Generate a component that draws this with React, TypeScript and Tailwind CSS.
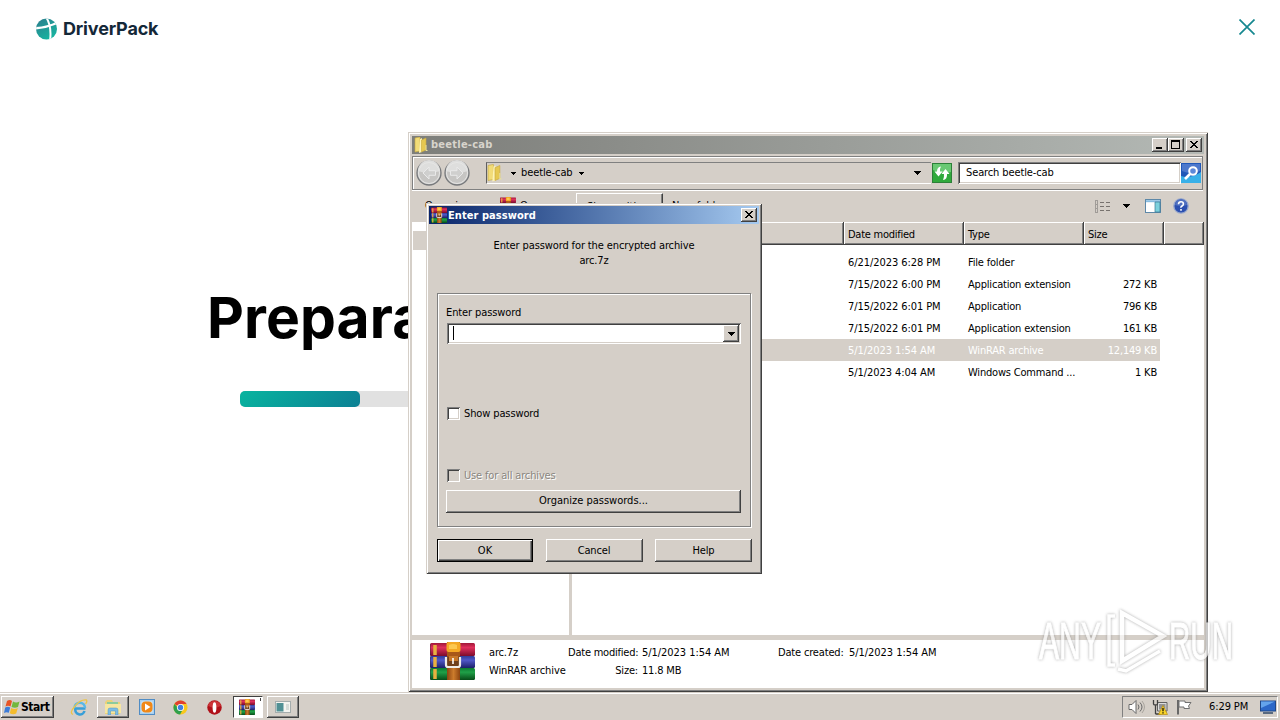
import type { ReactNode } from 'react';

const raised =
  'bg-[#d5cfc8] shadow-[inset_-1px_-1px_#404040,inset_1px_1px_#fff,inset_-2px_-2px_#808080]';
const sunken =
  'bg-white shadow-[inset_1px_1px_#808080,inset_-1px_-1px_#fff,inset_2px_2px_#404040,inset_-2px_-2px_#d5cfc8]';
const frame =
  'bg-[#d5cfc8] shadow-[inset_1px_1px_#d5cfc8,inset_-1px_-1px_#404040,inset_2px_2px_#fff,inset_-2px_-2px_#808080]';

const files = [
  { date: '6/21/2023 6:28 PM', type: 'File folder', size: '' },
  { date: '7/15/2022 6:00 PM', type: 'Application extension', size: '272 KB' },
  { date: '7/15/2022 6:01 PM', type: 'Application', size: '796 KB' },
  { date: '7/15/2022 6:01 PM', type: 'Application extension', size: '161 KB' },
  { date: '5/1/2023 1:54 AM', type: 'WinRAR archive', size: '12,149 KB', selected: true },
  { date: '5/1/2023 4:04 AM', type: 'Windows Command ...', size: '1 KB' },
];

function Caret({ className = '' }: { className?: string }) {
  return (
    <svg viewBox="0 0 8 4" className={`shrink-0 ${className}`} shapeRendering="crispEdges">
      <path d="M0 0H8L4 4Z" fill="#000" />
    </svg>
  );
}

function WinRar({ className = '' }: { className?: string }) {
  return (
    <svg viewBox="0 0 45 38" preserveAspectRatio="none" className={`shrink-0 ${className}`}>
      <defs>
        <linearGradient id="rar-r" x2="0" y2="1">
          <stop stopColor="#a01838" /><stop offset=".35" stopColor="#e0305c" /><stop offset="1" stopColor="#7c0c2c" />
        </linearGradient>
        <linearGradient id="rar-b" x2="0" y2="1">
          <stop stopColor="#303c98" /><stop offset=".35" stopColor="#5058c8" /><stop offset="1" stopColor="#1c2068" />
        </linearGradient>
        <linearGradient id="rar-g" x2="0" y2="1">
          <stop stopColor="#0c7a30" /><stop offset=".35" stopColor="#20a048" /><stop offset="1" stopColor="#084c18" />
        </linearGradient>
        <linearGradient id="rar-belt" x2="1" y2="0">
          <stop stopColor="#8c4410" /><stop offset=".5" stopColor="#cc7c2c" /><stop offset="1" stopColor="#8c4410" />
        </linearGradient>
      </defs>
      <rect y="1" width="45" height="13" rx="1.5" fill="url(#rar-r)" />
      <rect y="14" width="45" height="12" rx="1.5" fill="url(#rar-b)" />
      <rect y="26" width="45" height="12" rx="1.5" fill="url(#rar-g)" />
      <path d="M5 3v10M5 15v10M5 27v10" stroke="#e8b040" strokeWidth="3.5" />
      <path d="M.5 2v36" stroke="#302040" strokeOpacity=".4" />
      <rect x="17" width="13" height="38" fill="url(#rar-belt)" />
      <rect x="16.5" width="14" height="10" rx="2" fill="#f4a824" />
      <path d="M19 3q4-2 8 0v4h-8z" fill="#fcc850" />
      <path d="M17 10h13v4H17z" fill="#a85818" />
      <path d="M16 15v8q0 2 2 2h10q2 0 2-2v-8" fill="#70401c" stroke="#f0ece8" strokeWidth="2.2" />
      <path d="M19 14h9v5h-9z" fill="#c87828" />
      <path d="M23 16v6" stroke="#fff" strokeWidth="1.6" />
    </svg>
  );
}

function ZipFolder({ className = '' }: { className?: string }) {
  return (
    <svg viewBox="0 0 14 16" className={`shrink-0 ${className}`}>
      <path d="M1 1L6 0V14L1 15Z" fill="#f2dc78" stroke="#c9a93c" strokeWidth=".6" />
      <path d="M6 2L8 1V15L5 16Z" fill="#fdf3b4" />
      <path d="M7.5 3L12 1V13L7.5 15Z" fill="#e6c850" stroke="#c9a93c" strokeWidth=".6" />
      <path d="M12 8v5.5h1.5" stroke="#e8e0a0" fill="none" />
    </svg>
  );
}

function WinButton({ children }: { children: ReactNode }) {
  return (
    <div className={`flex h-[14px] w-4 items-center justify-center ${raised}`}>
      <svg viewBox="0 0 16 14" className="h-[14px] w-4" shapeRendering="crispEdges" fill="none" stroke="#000">
        {children}
      </svg>
    </div>
  );
}

const closeCross = <path d="M4 3l7 7M5 3l7 7M11 3l-7 7M12 3l-7 7" strokeWidth="1" shapeRendering="auto" />;

function NavCircle({ flip }: { flip?: boolean }) {
  return (
    <svg viewBox="0 0 26 26" className={flip ? 'ml-[2px] size-[26px] -scale-x-100' : 'size-[26px]'}>
      <circle cx="13" cy="13" r="12" fill="#c6c5c3" stroke="#77797c" strokeWidth="1.3" />
      <path d="M2 11a11 11 0 0 1 22 0q-11 4-22 0z" fill="#dededd" />
      <circle cx="13" cy="13" r="10.5" fill="none" stroke="#e6e6e5" />
      <path d="M13 7L7 13L13 19V15.3H19.5V10.7H13Z" fill="#cfcfce" stroke="#e9e9e9" />
    </svg>
  );
}

function Explorer() {
  return (
    <div className={`absolute left-[408px] top-[132px] flex h-[560px] w-[800px] flex-col p-1 ${frame}`}>
      <div className="flex h-[18px] shrink-0 items-center bg-linear-to-r from-[#7d7e7a] to-[#b4b9b5] px-[2px]">
        <ZipFolder className="h-4 w-[14px]" />
        <span className="ml-[3px] grow pt-px font-bold tracking-[0.25px] text-[#d8d4cc]">beetle-cab</span>
        <WinButton><path d="M4 10.5h6M4 9.5h6" /></WinButton>
        <WinButton><path d="M3.5 2.5h8v8h-8zM3 3.5h9" /></WinButton>
        <div className="ml-[2px]"><WinButton>{closeCross}</WinButton></div>
      </div>

      {/* Address bar */}
      <div className="mr-px mt-[2px] flex h-[34px] shrink-0 items-center border border-[#808080] pl-[3px] shadow-[inset_1px_1px_#fff,0_1px_#fff]">
        <div className="flex w-[70px]">
          <NavCircle />
          <NavCircle flip />
        </div>
        <div className="flex h-[22px] w-[445px] items-center border-b border-l border-t border-b-white border-l-[#606060] border-t-[#808080]">
          <ZipFolder className="h-[18px] w-[15px]" />
          <Caret className="ml-[8px] h-[3px] w-[6px]" />
          <span className="ml-[5px] w-[53px] tracking-[-0.1px]">beetle-cab</span>
          <Caret className="ml-[4px] h-[3px] w-[6px]" />
          <Caret className="ml-auto mr-[10px] h-1 w-[8px]" />
        </div>
        <svg viewBox="0 0 20 20" className="ml-px size-5">
          <rect x=".5" y=".5" width="19" height="19" fill="#30a93c" stroke="#2c8038" />
          <path d="M1 1h18v8Q9 12 1 7z" fill="#69c973" />
          <path d="M9 3.5Q5 4 5 8.500H2.500L6.500 13.500L10.500 8.500H8Q7.500 6 9 3.500zM11 17q4.500-.5 4-6h2.500l-4-5-4 5h2.500q.3 3.500-1 6z" fill="#fff" />
        </svg>
        <div className={`ml-[6px] flex h-[22px] w-[223px] items-center pl-2 tracking-[-0.12px] ${sunken}`}>
          Search beetle-cab
        </div>
        <svg viewBox="0 0 20 20" className="size-5">
          <rect width="20" height="20" fill="#2058b8" />
          <path d="M0 20V13Q10 16 20 9v11z" fill="#38b0e8" />
          <path d="M1 1h18v7Q10 12 1 8z" fill="#4c78cc" />
          <circle cx="12" cy="8" r="3.8" fill="#5c88d8" stroke="#fff" strokeWidth="2" />
          <path d="M9 11l-5 5" stroke="#fff" strokeWidth="2.6" />
        </svg>
      </div>

      {/* Command bar */}
      <div className="flex h-8 shrink-0 items-center">
        <span className="ml-[13px] w-[75px]">Organize</span>
        <WinRar className="-mt-[2px] size-4" />
        <span className="ml-1 w-[56px]">Open</span>
        <div className="h-[26px] w-[87px] border border-b-[#404040] border-l-white border-r-[#404040] border-t-white pl-[10px] leading-[25px] shadow-[inset_-1px_0_#808080]">
          Share with
        </div>
        <span className="ml-[9px]">New folder</span>
        <svg viewBox="0 0 16 13" className="ml-auto mr-[12px] h-[13px] w-4" shapeRendering="crispEdges" fill="none">
          <path d="M1.5 1v11M3.5 1v11M1 .5h3M1 4.5h3M1 8.5h3M1 12.5h3" stroke="#a09c98" />
          <path d="M6 2.5h4m2 0h4M6 6.5h4m2 0h4M6 10.5h4m2 0h4" stroke="#77726e" />
        </svg>
        <Caret className="mr-[15px] h-1 w-[8px]" />
        <svg viewBox="0 0 16 14" className="mr-3 h-[14px] w-4">
          <rect x=".5" y=".5" width="15" height="13" fill="#fff" stroke="#5d88a8" />
          <path d="M1 2.2h14" stroke="#88bce0" strokeWidth="2" />
          <path d="M10 3h5v10h-5z" fill="#7cd0dc" stroke="#3a7894" strokeWidth=".7" />
        </svg>
        <svg viewBox="0 0 16 16" className="mr-[15px] size-4">
          <circle cx="8" cy="8" r="7.2" fill="#2c50b0" stroke="#98a8cc" strokeWidth="1.3" />
          <path d="M2 7a6 6 0 0 1 12 0q-6 2-12 0z" fill="#5070c0" />
          <path d="M5.5 6.2Q5.6 3.8 8 3.8T10.4 6Q10.4 7.2 9 8T8 9.8M8 11v1.8" stroke="#fff" strokeWidth="1.6" fill="none" />
        </svg>
      </div>

      <div className="flex h-[413px] shrink-0 bg-white">
        <div className="w-[157px]">
          <div className="ml-px mt-[9px] h-[19px] bg-[#d5cfc8]" />
        </div>
        <div className="w-[3px] bg-[#d5cfc8]" />
        <div className="flex grow flex-col">
          <div className="grid h-[23px] grid-cols-[272px_120px_120px_80px_40px] grid-rows-[23px]">
            {['', 'Date modified', 'Type', 'Size', ''].map((label, i) => (
              <div key={i} className={`pl-1 pt-px leading-[23px] tracking-[-0.25px] ${raised}`}>{label}</div>
            ))}
          </div>
          <div className="mt-[6px]">
            {files.map((f, i) => (
              <div
                key={i}
                className={`grid h-[22px] w-[588px] grid-cols-[276px_120px_120px_69px] whitespace-nowrap leading-[23px] ${f.selected ? 'bg-[#d5cfc8] text-white' : ''}`}
              >
                <span />
                <span className="tracking-[-0.07px]">{f.date}</span>
                <span className="tracking-[-0.19px]">{f.type}</span>
                <span className="text-right tracking-[-0.2px]">{f.size}</span>
              </div>
            ))}
          </div>
        </div>
      </div>

      {/* Details pane */}
      <div className="mt-[5px] flex h-12 shrink-0 whitespace-nowrap bg-white tracking-[-0.17px]">
        <WinRar className="ml-[18px] mt-[2px] h-[38px] w-[45px]" />
        <div className="ml-[14px] mt-1 w-[79px] leading-[18px]">
          <div>arc.7z</div>
          <div className="tracking-[-0.1px]">WinRAR archive</div>
        </div>
        <div className="mt-1 grid w-[210px] grid-cols-[70px_1fr] content-start gap-x-[4px] leading-[18px]">
          <span className="text-right tracking-[-0.22px]">Date modified:</span>
          <span className="tracking-[-0.05px]">5/1/2023 1:54 AM</span>
          <span className="text-right">Size:</span>
          <span>11.8 MB</span>
        </div>
        <div className="mt-1 flex leading-[18px]">
          <span className="w-[71px]">Date created:</span>
          <span className="tracking-[-0.05px]">5/1/2023 1:54 AM</span>
        </div>
      </div>
    </div>
  );
}

function PasswordDialog() {
  return (
    <div className={`absolute left-[426px] top-[203px] flex h-[371px] w-[336px] flex-col p-[3px] ${frame}`}>
      <div className="flex h-[18px] shrink-0 items-center bg-linear-to-r from-[#0a246a] to-[#a6caf0] px-[2px]">
        <WinRar className="size-4" />
        <span className="ml-px grow pt-[2px] font-bold tracking-[0.06px] text-white">Enter password</span>
        <WinButton>{closeCross}</WinButton>
      </div>

      <div className="mt-[14px] h-[55px] text-center leading-[15px] tracking-[-0.12px]">
        <div>Enter password for the encrypted archive</div>
        <div>arc.7z</div>
      </div>

      <div className="mx-2 flex h-[234px] flex-col border border-[#808080] px-[9px] shadow-[inset_1px_1px_#fff,1px_1px_#fff]">
        <span className="-ml-px mt-[10px] leading-[17px] tracking-[-0.1px]">Enter password</span>
        <div className={`mt-[2px] flex h-[21px] w-[294px] items-center justify-between py-[2px] pl-[2px] pr-[2px] ${sunken}`}>
          <div className="mb-px ml-1 h-[14px] w-px bg-black" />
          <div className={`flex h-[17px] w-4 items-center justify-center ${raised}`}>
            <Caret className="h-1 w-[8px]" />
          </div>
        </div>
        <div className="mt-[63px] flex h-[13px] items-center gap-[4px] tracking-[-0.12px]">
          <div className={`size-[13px] ${sunken}`} />
          <span className="pt-[2px]">Show password</span>
        </div>
        <div className="mt-[49px] flex h-[13px] items-center gap-[4px] tracking-[-0.15px] text-[#8a8680] [text-shadow:1px_1px_#fff]">
          <div className="size-[13px] bg-[#d5cfc8] shadow-[inset_1px_1px_#808080,inset_-1px_-1px_#fff,inset_2px_2px_#404040]" />
          <span className="pt-[2px]">Use for all archives</span>
        </div>
        <div className={`-ml-px mt-[8px] flex h-[23px] w-[295px] items-center justify-center ${raised}`}>
          Organize passwords...
        </div>
      </div>

      <div className="mx-[7px] mt-[12px] flex justify-between">
        <div className="ml-px flex h-[23px] w-[96px] items-center justify-center border border-black bg-[#d5cfc8] pt-px shadow-[inset_1px_1px_#fff,inset_-1px_-1px_#404040,inset_-2px_-2px_#808080]">
          OK
        </div>
        <div className={`flex h-[23px] w-[97px] items-center justify-center pt-px tracking-[-0.15px] ${raised}`}>Cancel</div>
        <div className={`flex h-[23px] w-[97px] items-center justify-center pt-px tracking-[-0.2px] ${raised}`}>Help</div>
      </div>
    </div>
  );
}

function Taskbar() {
  return (
    <div className="absolute inset-x-0 bottom-0 flex h-7 items-center bg-[#d5cfc8] pl-px shadow-[inset_0_1px_#d5cfc8,inset_0_2px_#fff]">
      <div className={`mt-[2px] flex h-[22px] w-[53px] items-center pl-[3px] text-[12px] font-bold tracking-[-0.45px] ${raised}`}>
        <svg viewBox="0 0 16 16" className="mr-px size-4 shrink-0">
          <path d="M3 2Q6 0 8 2L6.5 7.5Q4 6 1.5 7.5Z" fill="#e85424" />
          <path d="M9 2.5Q12 4.5 15.5 2.5L14 8Q11 9.5 7.5 8Z" fill="#72b83c" />
          <path d="M1.2 8.5Q4 7 6.2 8.5L4.8 13.8Q2.5 12.5 0 14Z" fill="#3c7cd8" />
          <path d="M7.2 9Q10.5 10.8 13.8 9L12.2 14.5Q9 16 5.8 14.2Z" fill="#f4bc2c" />
        </svg>
        Start
      </div>

      <svg viewBox="0 0 18 18" className="ml-[16px] mt-[2px] size-[18px]">
        <path d="M15.5 10.5H5.5a4.5 4.5 0 0 0 9 2.5" fill="none" stroke="#389fd8" strokeWidth="2.6" />
        <path d="M4.500 10a5 5 0 0 1 10.500 0" fill="none" stroke="#58b8e8" strokeWidth="2.6" />
        <path d="M3 16.5Q-1 15 5 8T16.5 2q1 2-1 4" fill="none" stroke="#ecc448" strokeWidth="1.3" />
      </svg>
      <div className={`ml-[9px] mt-[2px] flex h-[22px] w-8 items-center justify-center ${raised}`}>
        <svg viewBox="0 0 18 16" className="h-4 w-[18px]">
          <path d="M1 3l2-2h5l1 2h7v12H1z" fill="#ead27a" />
          <path d="M3 3h11v4H3z" fill="#8ccb9c" />
          <path d="M1 5h16v9H1z" fill="#f6e6a0" />
          <path d="M4 16V11q0-2 2-2h6q2 0 2 2v5h-2.5v-4h-5v4z" fill="#7cbce4" stroke="#4c94c4" strokeWidth=".5" />
        </svg>
      </div>
      <svg viewBox="0 0 16 16" className="ml-[10px] mt-[2px] size-4">
        <rect x=".5" y=".5" width="15" height="15" fill="#a8d0f0" stroke="#508cc4" />
        <rect x="2.5" y="2.5" width="11" height="11" fill="#d8ecf8" />
        <rect x="2.5" y="2.5" width="11" height="11" rx="4" fill="#f08818" />
        <path d="M6 4.5L11.5 8L6 11.5Z" fill="#fff" />
      </svg>
      <svg viewBox="0 0 16 16" className="ml-[18px] mt-[2px] size-[15px]">
        <circle cx="8" cy="8" r="7.5" fill="#f8c81c" />
        <path d="M8 8L1.5 4.2A7.5 7.5 0 0 1 14.5 4.2H8Z" fill="#e04030" />
        <path d="M8 8H5L1.5 4.2A7.5 7.5 0 0 0 7.5 15.5L10.5 10Z" fill="#30a04c" />
        <circle cx="8" cy="8" r="3.8" fill="#fff" />
        <circle cx="8" cy="8" r="2.9" fill="#4080e0" />
      </svg>
      <svg viewBox="0 0 16 16" className="ml-[19px] mt-[2px] size-[15px]">
        <circle cx="8" cy="8" r="7.7" fill="#b01018" />
        <path d="M1 6a7.5 7.5 0 0 1 14 0q-7 4-14 0z" fill="#cc3438" />
        <ellipse cx="8" cy="8" rx="2" ry="5.6" fill="#fff" />
      </svg>
      <div className="ml-[11px] mt-[2px] flex h-[22px] w-[30px] items-center border border-b-white border-l-[#404040] border-r-white border-t-[#404040] bg-white pl-[5px]">
        <WinRar className="size-4" />
        <div className="mb-auto ml-auto mr-px mt-px h-[3px] w-px bg-[#404040]" />
      </div>
      <div className={`ml-1 mt-[2px] flex h-[22px] w-8 items-center justify-center ${raised}`}>
        <svg viewBox="0 0 16 12" className="h-3 w-4">
          <rect x=".5" y=".5" width="15" height="11" fill="#f4f4f0" stroke="#a4acac" />
          <rect x="1.5" y="2" width="7" height="8.5" fill="#509094" />
          <path d="M11 4h3M11 6h3M11 8h3" stroke="#b8c4c0" />
        </svg>
      </div>

      <div className="ml-auto mr-[2px] mt-[2px] flex h-[22px] w-[156px] items-center border border-b-white border-l-[#808080] border-r-white border-t-[#808080] pl-[5px]">
        <svg viewBox="0 0 17 16" className="h-4 w-[17px]" fill="none" stroke="#686868">
          <path d="M1 5.5h3L8 1.5v13L4 10.5H1z" fill="#fff" />
          <path d="M10 5.5q2 2.5 0 5M12 3.5q4 4.5 0 9" />
          <path d="M14 2q5 6 0 12" stroke="#a8a49e" />
        </svg>
        <svg viewBox="0 0 16 16" className="ml-[7px] size-4">
          <path d="M5.5 3.5h9.5v8.500h-9.500z" fill="#ddd" stroke="#606060" />
          <path d="M7 5h6.5v5.5H7z" fill="#949494" />
          <path d="M1.5 1v4q0 1 2 1v9M5.5 1v4q0 1-2 1M3.5 15h5" fill="none" stroke="#404040" strokeWidth="1.3" />
          <path d="M11 6.5L15.5 15.5H6.5Z" fill="#f8d428" stroke="#b88c10" strokeWidth=".7" />
          <path d="M11 9v3.3M11 13.3v1.2" stroke="#000" strokeWidth="1.2" />
        </svg>
        <svg viewBox="0 0 16 16" className="ml-2 size-4">
          <path d="M2 1v14.5" stroke="#686868" strokeWidth="2" />
          <path d="M3 2h6v1.5h6L12.5 7l1 2.5H8V8H3z" fill="#fff" stroke="#707070" />
        </svg>
        <span className="ml-[17px] w-[41px] whitespace-nowrap pt-px tracking-[-0.1px]">6:29 PM</span>
        <svg viewBox="0 0 16 14" className="ml-[10px] h-[14px] w-4">
          <rect x=".5" y="1" width="15" height="10" fill="#2c68c8" stroke="#204888" />
          <path d="M1 1.5h14L1 8z" fill="#64a4ec" />
          <path d="M3 13h10" stroke="#304868" strokeWidth="1.5" />
        </svg>
      </div>
    </div>
  );
}

function Watermark() {
  return (
    <svg
      viewBox="0 0 220 70"
      className="absolute left-[1036px] top-[604px] h-[70px] w-[220px] opacity-70 [filter:drop-shadow(0_0_1.5px_#888)]"
      fill="none"
      stroke="#fff"
    >
      <g fontFamily="Liberation Sans" fontSize="51" fill="#fff" strokeWidth="1">
        <text x="3" y="55" textLength="62" lengthAdjust="spacingAndGlyphs">ANY</text>
        <text x="133" y="55" textLength="64" lengthAdjust="spacingAndGlyphs">RUN</text>
      </g>
      <path d="M86 9L127 32L86 57Z" strokeWidth="4.5" />
      <path d="M79 12H73V61H79M82 65L90 67L124 47" strokeWidth="3.5" />
    </svg>
  );
}

export default function App() {
  return (
    <div className="relative h-[720px] w-[1280px] overflow-hidden bg-white font-['DejaVu_Sans_Condensed','DejaVu_Sans','Noto_Sans',sans-serif] text-[11px] text-black">
      <header className="flex items-center pl-[35px] pr-[25px] pt-[17px]">
        <svg viewBox="0 0 22 22" className="size-[22px]">
          <defs>
            <linearGradient id="ball" x1="0" x2=".6" y2="1">
              <stop stopColor="#2c7c8c" /><stop offset="1" stopColor="#18b4a0" />
            </linearGradient>
            <clipPath id="ball-clip"><circle cx="11.5" cy="11" r="10.5" /></clipPath>
          </defs>
          <circle cx="11.5" cy="11" r="10.5" fill="url(#ball)" />
          <g clipPath="url(#ball-clip)" stroke="#fff" fill="none">
            <path d="M-1 10.500Q12 9.500 23 4.500" strokeWidth="2.400" />
            <path d="M11-1Q17 8 15 23" strokeWidth="2" />
          </g>
        </svg>
        <span className="ml-[6px] font-['Inter',sans-serif] text-[18px] font-bold leading-[24px] tracking-[-0.17px] text-[#142838]">
          DriverPack
        </span>
        <svg viewBox="0 0 16 16" className="-mt-[4px] ml-auto size-4" stroke="#168890" strokeWidth="1.7">
          <path d="M.5 .5l15 15M15.5 .5l-15 15" />
        </svg>
      </header>

      <main className="pl-[207px] pt-[241px]">
        <h1 className="font-['Inter',sans-serif] text-[57px] font-bold leading-[72px] tracking-[0.1px]">Prepara</h1>
        <div className="ml-[33px] mt-[37px] h-4 w-[800px] rounded-[5px] bg-[#e1e1e1]">
          <div className="h-4 w-[120px] rounded-[5px] bg-linear-[135deg] from-[#08b49f] to-[#0c8094]" />
        </div>
      </main>

      <Explorer />
      <PasswordDialog />
      <Taskbar />
      <Watermark />
    </div>
  );
}
